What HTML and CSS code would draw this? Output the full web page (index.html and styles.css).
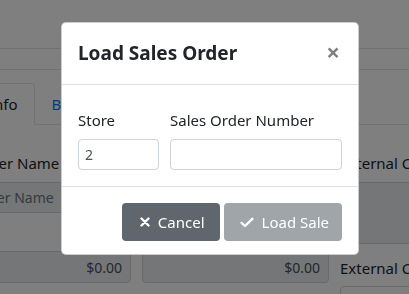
FILE: index.html
```html
<!DOCTYPE html>
<html lang="en">

<head>
    <meta charset="UTF-8">
    <meta name="viewport" content="width=device-width, initial-scale=1.0">
    <title>Sales - Load Sales Order</title>
    <link rel="stylesheet" href="styles.css">
</head>

<body>

    <div class="page">
        <div class="topbar"></div>
        <div class="subbar"></div>

        <ul class="tabs">
            <li class="tab active">Info</li>
            <li class="tab link">Billing</li>
            <li class="tab link">Shipping</li>
        </ul>

        <div class="fields">
            <div class="field">
                <label class="name-label">Customer Name</label>
                <input class="form-input readonly name-input" type="text" placeholder="Customer Name" readonly>
            </div>
            <div class="field">
                <label>Email</label>
                <input class="form-input readonly" type="text" readonly>
            </div>
            <div class="field">
                <label>External Customer</label>
                <textarea class="form-input readonly tall" readonly></textarea>
            </div>
        </div>

        <div class="fields second">
            <div class="field">
                <input class="form-input readonly money" type="text" value="$0.00" readonly>
            </div>
            <div class="field">
                <input class="form-input readonly money" type="text" value="$0.00" readonly>
            </div>
            <div class="field">
                <label class="low">External Customer Id</label>
                <input class="form-input" type="text">
            </div>
        </div>
    </div>

    <div class="backdrop"></div>

    <div class="modal">
        <div class="modal-header">
            <h5 class="modal-title">Load Sales Order</h5>
            <button class="close" type="button">&times;</button>
        </div>
        <div class="modal-body">
            <div class="load-form">
                <div class="field">
                    <label>Store</label>
                    <input class="form-input small" type="text" value="2">
                </div>
                <div class="field">
                    <label>Sales Order Number</label>
                    <input class="form-input small" type="text">
                </div>
            </div>
        </div>
        <div class="modal-footer">
            <button class="btn btn-cancel" type="button">
                <svg width="10" height="10" viewBox="0 0 10 10"><path d="M1.5 1.5 L8.5 8.5 M8.5 1.5 L1.5 8.5" stroke="#fff" stroke-width="2.4" stroke-linecap="round"/></svg>
                Cancel
            </button>
            <button class="btn btn-load" type="button" disabled>
                <svg width="14" height="11" viewBox="0 0 14 11"><path d="M1.6 5.8 L5 9 L12.4 1.8" stroke="#fff" stroke-width="2.4" fill="none" stroke-linecap="round" stroke-linejoin="round"/></svg>
                Load Sale
            </button>
        </div>
    </div>

</body>

</html>
```

FILE: styles.css
```css
body {
    margin: 0;
    width: 409px;
    height: 294px;
    overflow: hidden;
    background-color: #fff;
    color: #212529;
    font-family: 'Noto Sans', 'Open Sans', sans-serif;
    font-size: 15px;
    line-height: 24px;
}

.page {
    margin-left: -58px;
    width: 700px;
}

.topbar {
    height: 48px;
    border-bottom: 1px solid #dee2e6;
}

.subbar {
    height: 20px;
    border-bottom: 1px solid #dee2e6;
}

.tabs {
    display: flex;
    list-style: none;
    margin: 13px 0 0;
    padding: 0 0 0 26px;
    border-bottom: 1px solid #dee2e6;
}

.tab {
    padding: 8px 16px;
    border: 1px solid transparent;
    border-radius: 4px 4px 0 0;
    margin-bottom: -1px;
}

.tab.active {
    border-color: #dee2e6 #dee2e6 #fff;
    background-color: #fff;
    padding-left: 20px;
    padding-right: 16px;
}

.tab.link {
    color: #007bff;
}

.fields {
    display: grid;
    grid-template-columns: 189px 187px 220px;
    column-gap: 11px;
    margin-top: 26px;
}

.fields.second {
    margin-top: 7px;
}

.field {
    display: flex;
    flex-direction: column;
    min-width: 0;
}

.field label {
    margin-bottom: 7px;
}

.field .name-label {
    margin-left: 2px;
}

.field label.low {
    margin-top: 5px;
    margin-bottom: 6px;
}

.form-input {
    width: 100%;
    min-width: 0;
    height: 31px;
    box-sizing: border-box;
    padding: 0 12px;
    border: 1px solid #ced4da;
    border-radius: 4px;
    background-color: #fff;
    color: #495057;
    font-family: inherit;
    font-size: 14px;
    resize: none;
}

.form-input::placeholder {
    color: #6c757d;
}

.form-input.readonly {
    background-color: #e9ecef;
}

.form-input.name-input {
    padding-left: 3px;
}

.form-input.tall {
    height: 62px;
}

.form-input.money {
    height: 32px;
    text-align: right;
    padding-right: 8px;
}

.backdrop {
    position: fixed;
    top: 0;
    left: 0;
    right: 0;
    bottom: 0;
    background-color: rgba(0, 0, 0, 0.5);
}

.modal {
    position: fixed;
    top: 22px;
    left: 61px;
    width: 298px;
    box-sizing: border-box;
    background-color: #fff;
    border: 1px solid rgba(0, 0, 0, 0.2);
    border-radius: 5px;
}

.modal-header {
    display: flex;
    justify-content: space-between;
    align-items: flex-start;
    padding: 15px 16px 16px;
    border-bottom: 1px solid #dee2e6;
}

.modal-title {
    margin: 0;
    font-size: 19px;
    font-weight: bold;
    line-height: 30px;
}

.close {
    padding: 0;
    margin: 2px 2px 0 0;
    border: none;
    background: none;
    font-family: inherit;
    font-size: 24px;
    font-weight: bold;
    line-height: 24px;
    color: #000;
    opacity: 0.5;
}

.modal-body {
    padding: 23px 16px 16px;
}

.load-form {
    display: grid;
    grid-template-columns: 81px 1fr;
    column-gap: 11px;
}

.form-input.small {
    padding: 0 6px;
    font-size: 14px;
    color: #495057;
}

.modal-footer {
    display: flex;
    justify-content: flex-end;
    gap: 4px;
    padding: 16px 16px 13px;
    border-top: 1px solid #dee2e6;
}

.btn {
    display: flex;
    align-items: center;
    gap: 8px;
    height: 38px;
    box-sizing: border-box;
    padding: 0 13px 0 16px;
    border: 1px solid transparent;
    border-radius: 4px;
    color: #fff;
    font-family: inherit;
    font-size: 15px;
}

.btn-cancel {
    background-color: #5f666d;
    padding-left: 17px;
    padding-right: 14px;
}

.btn-load {
    background-color: #a0a5aa;
    padding-right: 12px;
    padding-left: 15px;
}
```
